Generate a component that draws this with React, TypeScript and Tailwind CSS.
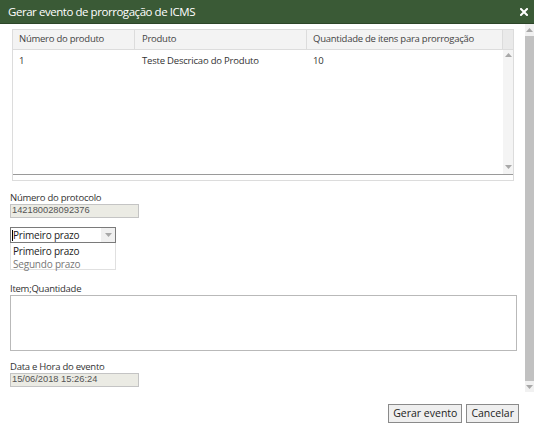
const font = { fontFamily: '"Open Sans", "Noto Sans", sans-serif' };

const ArrowUp = () => (
  <svg width="7" height="4" viewBox="0 0 7 4">
    <path d="M0 4 L3.5 0 L7 4 Z" fill="#a8a8a8" />
  </svg>
);

const ArrowDown = () => (
  <svg width="7" height="4" viewBox="0 0 7 4">
    <path d="M0 0 L7 0 L3.5 4 Z" fill="#a8a8a8" />
  </svg>
);

const columns = [
  { label: "Número do produto", w: "w-[122px]", pl: "pl-[6px]" },
  { label: "Produto", w: "w-[172px]", pl: "pl-[7px]" },
  { label: "Quantidade de itens para prorrogação", w: "w-[196px]", pl: "pl-[6px]" },
];

const ProductGrid = () => (
  <div className="ml-[12px] mt-[5px] w-[502px] h-[152px] border border-[#dcdcdc] flex flex-col bg-white">
    <div className="h-[20px] flex bg-[#f3f3f3] border-b border-[#dcdcdc] text-[9.5px] tracking-[-0.25px] text-[#444]">
      {columns.map((c) => (
        <div key={c.label} className={`${c.w} ${c.pl} border-r border-[#dcdcdc] flex items-center`}>
          {c.label}
        </div>
      ))}
      <div className="flex-1 bg-[#eaeaea]" />
    </div>
    <div className="flex h-[125px] border-b border-[#9a9a9a]">
      <div className="flex-1">
        <div className="h-[22px] flex items-center text-[9.5px] tracking-[-0.2px] text-[#333]">
          <div className="w-[122px] pl-[6px]">1</div>
          <div className="w-[172px] pl-[7px]">Teste Descricao do Produto</div>
          <div className="w-[196px] pl-[6px]">10</div>
        </div>
      </div>
      <div className="w-[12px] bg-[#f4f4f4] flex flex-col items-center justify-between pt-[3px] pb-[5px]">
        <ArrowUp />
        <ArrowDown />
      </div>
    </div>
    <div className="flex-1" />
  </div>
);

const ReadOnlyInput = ({ value }: { value: string }) => (
  <div
    className="w-[129px] h-[14px] bg-[#ebebe4] border border-[#c4c4c4] flex items-center pl-[1px] text-[9.3px] text-[#545454]"
    style={{ fontFamily: '"Liberation Sans", Arial, sans-serif' }}
  >
    {value}
  </div>
);

const Label = ({ text, mt }: { text: string; mt: string }) => (
  <div className={`ml-[10px] ${mt} text-[9.5px] tracking-[-0.25px] text-[#333] leading-[12px]`}>
    {text}
  </div>
);

export default function App() {
  return (
    <div className="w-[534px] h-[433px] overflow-hidden bg-white flex flex-col" style={font}>
      <div className="h-[24px] bg-[#3a5a36] border-b border-[#2c4629] flex items-center justify-between pl-[8px] pr-[6px]">
        <span className="text-[11.5px] text-white tracking-[-0.45px]">Gerar evento de prorrogação de ICMS</span>
        <svg width="8" height="8" viewBox="0 0 8 8">
          <path d="M1 1 L7 7 M7 1 L1 7" stroke="white" strokeWidth="2" strokeLinecap="square" />
        </svg>
      </div>

      <div className="h-[368px] flex">
        <div className="flex-1 flex flex-col">
          <ProductGrid />

          <Label text="Número do protocolo" mt="mt-[11px]" />
          <div className="ml-[10px]">
            <ReadOnlyInput value="142180028092376" />
          </div>

          <div className="ml-[10px] mt-[9px] w-[106px]">
            <div className="h-[16px] border border-[#7a7a7a] flex items-center bg-white">
              <span className="w-[1px] h-[11px] bg-black ml-[1px]" />
              <span className="flex-1 text-[10px] tracking-[-0.2px] text-[#222] leading-none">Primeiro prazo</span>
              <div className="w-[14px] h-full bg-[#f0f0f0] flex items-center justify-center">
                <ArrowDown />
              </div>
            </div>
            <div className="h-[27px] border border-[#e0e0e0] border-t-0 bg-white flex flex-col text-[10px] tracking-[-0.2px] leading-[13px] pt-[2px]">
              <span className="pl-[2px] text-[#222]">Primeiro prazo</span>
              <span className="pl-[2px] text-[#777]">Segundo prazo</span>
            </div>
          </div>

          <Label text="Item;Quantidade" mt="mt-[13px]" />
          <div className="ml-[10px] w-[507px] h-[56px] border border-[#b9b9b9] bg-white" />

          <Label text="Data e Hora do evento" mt="mt-[10px]" />
          <div className="ml-[10px]">
            <ReadOnlyInput value="15/06/2018 15:26:24" />
          </div>
        </div>

        <div className="w-[9px] bg-[#f1f1f1] flex flex-col items-center pt-[4px] pb-[3px]">
          <ArrowUp />
          <div className="w-[9px] flex-1 bg-[#c1c1c1] my-[4px]" />
          <ArrowDown />
        </div>
      </div>

      <div className="flex-1 flex justify-end items-start gap-[4px] pr-[15px] pt-[12px]">
        <button className="h-[19px] px-[4px] border border-[#8a8a8a] bg-[#efefef] text-[10.5px] text-[#222] leading-none">
          Gerar evento
        </button>
        <button className="h-[19px] px-[4px] border border-[#8a8a8a] bg-[#efefef] text-[10.5px] text-[#222] leading-none">
          Cancelar
        </button>
      </div>
    </div>
  );
}
